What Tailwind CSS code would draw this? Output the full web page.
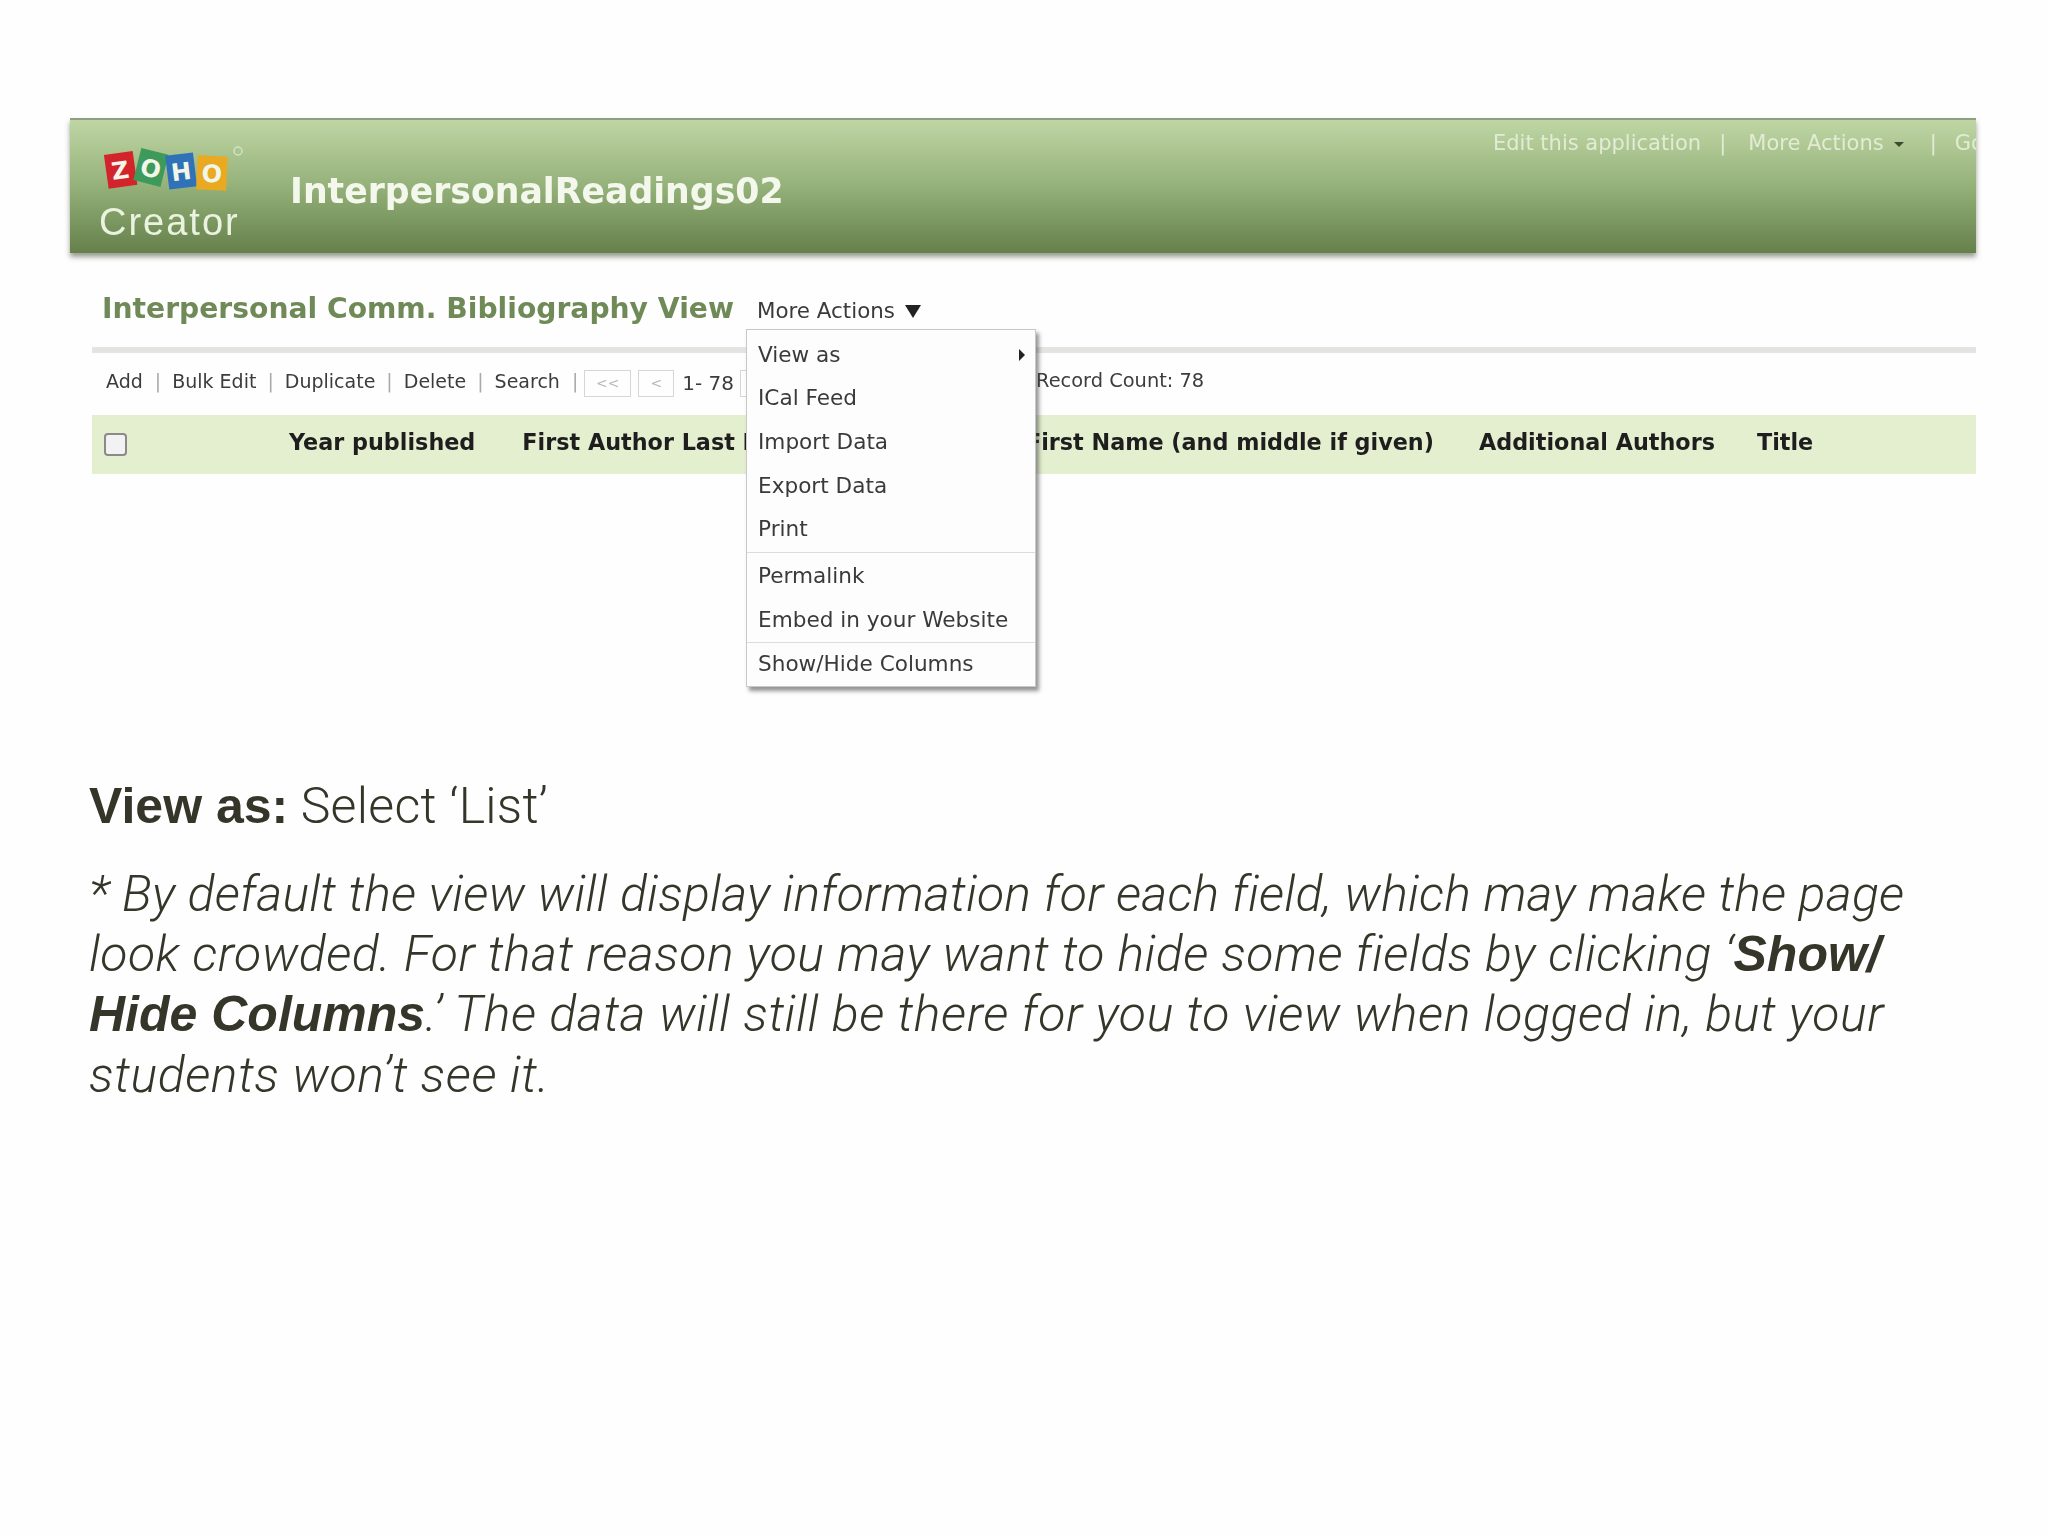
<!DOCTYPE html>
<html lang="en">
<head>
  <meta charset="UTF-8" />
  <title>View as: Select List</title>
  <script src="https://cdn.jsdelivr.net/npm/@tailwindcss/browser@4"></script>
</head>
<body class="w-[2048px] h-[1536px] overflow-hidden bg-[#fefefe] font-['Liberation_Sans',sans-serif]">

  <!-- Screenshot of the app -->
  <section class="relative ml-[70px] mt-[118px] w-[1906px] h-[602px] blur-[0.7px] font-['DejaVu_Sans',sans-serif]">

    <!-- Banner -->
    <header class="flex h-[135px] overflow-hidden border-t-2 border-[#8f9e86] bg-gradient-to-b from-[#bfd6a4] via-[#95b17a] to-[#65804a] shadow-[0_4px_5px_rgba(70,80,60,0.55)]">
      <div class="ml-[29px] w-[162px] shrink-0 pt-[23px]">
        <svg width="150" height="56" viewBox="0 0 150 56" class="block">
          <g font-family="DejaVu Sans" font-weight="700" font-size="24" text-anchor="middle" fill="#f2f6ea">
            <g transform="rotate(-8 21 26)"><rect x="7" y="10" width="29" height="34" fill="#d3242c" /><text x="21" y="36">Z</text></g>
            <g transform="rotate(14 52 24)"><rect x="38" y="8" width="28" height="33" fill="#3d9a5a" /><text x="52" y="34">O</text></g>
            <g transform="rotate(-7 82 27)"><rect x="68" y="11" width="28" height="34" fill="#2f72b8" /><text x="82" y="37">H</text></g>
            <g transform="rotate(3 113 29)"><rect x="98" y="13" width="30" height="34" fill="#e9a921" /><text x="113" y="39">O</text></g>
          </g>
          <circle cx="139" cy="8" r="4" fill="none" stroke="#d5e3c6" stroke-width="1.5" />
        </svg>
        <div class="mt-[3px] font-['Liberation_Sans',sans-serif] text-[38px] leading-[40px] tracking-[2px] text-[#eaf3df]">Creator</div>
      </div>
      <h1 class="ml-[29px] mt-[51px] w-[1203px] shrink-0 self-start text-[34.7px] leading-[40px] font-bold text-[#f4f8ec]">InterpersonalReadings02</h1>
      <nav class="mt-[9px] flex shrink-0 items-start whitespace-nowrap text-[21px] leading-[28px] text-[#e2ecd5]">
        <span>Edit this application</span>
        <span class="ml-[18px]">|</span>
        <span class="ml-[22px]">More Actions</span>
        <span class="ml-[10px] mt-[13px] h-0 w-0 border-x-[5px] border-t-[5px] border-x-transparent border-t-[#3c4a30]"></span>
        <span class="ml-[26px]">|</span>
        <span class="ml-[18px]">Go</span>
      </nav>
    </header>

    <!-- View title -->
    <div class="ml-[32px] mt-[38px] flex items-center">
      <h2 class="text-[28.2px] leading-[36px] font-bold text-[#6f8a57]">Interpersonal Comm. Bibliography View</h2>
      <span class="ml-[23px] mt-[4px] text-[21.4px] leading-[28px] text-[#3a3a3a]">More Actions</span>
      <span class="ml-[10px] mt-[4px] h-0 w-0 border-x-[8px] border-t-[13px] border-x-transparent border-t-[#222]"></span>
    </div>

    <div class="ml-[22px] mt-[20px] h-[6px] bg-[#e4e4e2]"></div>

    <!-- Toolbar -->
    <div class="ml-[36px] mt-[13px] flex h-[30px] items-center text-[19px] text-[#3c3c3c]">
      <span>Add</span><span class="ml-[12px] text-[#aaa]">|</span>
      <span class="ml-[11px]">Bulk Edit</span><span class="ml-[11px] text-[#aaa]">|</span>
      <span class="ml-[11px]">Duplicate</span><span class="ml-[11px] text-[#aaa]">|</span>
      <span class="ml-[11px]">Delete</span><span class="ml-[11px] text-[#aaa]">|</span>
      <span class="ml-[11px]">Search</span><span class="ml-[12px] text-[#aaa]">|</span>
      <span class="ml-[6px] mt-[4px] flex h-[27px] w-[47px] items-center justify-center border border-[#d6d6d6] text-[14px] text-[#b8b8b8]">&lt;&lt;</span>
      <span class="ml-[7px] mt-[4px] flex h-[27px] w-[36px] items-center justify-center border border-[#d6d6d6] text-[14px] text-[#b8b8b8]">&lt;</span>
      <span class="ml-[8px] mt-[4px] text-[20px]">1- 78</span>
      <span class="ml-[6px] mt-[4px] h-[27px] w-[36px] border border-[#d6d6d6]"></span>
      <span class="ml-[260px] text-[19.4px]">Record Count: 78</span>
    </div>

    <!-- Column headers -->
    <div class="ml-[22px] mt-[19px] flex h-[59px] items-center bg-[#e3efcf] pb-[3px] text-[22.3px] font-bold text-[#1e1e1e]">
      <span class="ml-[12px] mt-[3px] h-[23px] w-[23px] shrink-0 rounded-[4px] border-2 border-[#8a8a8a] bg-[#f2f2f2]"></span>
      <div class="ml-[162px] flex whitespace-nowrap">
        <span>Year published</span>
        <span class="ml-[47px]">First Author Last Name</span>
        <span class="ml-[52px]">First Author First Name (and middle if given)</span>
        <span class="ml-[45px]">Additional Authors</span>
        <span class="ml-[42px]">Title</span>
      </div>
    </div>

    <!-- More Actions menu -->
    <div class="absolute left-[676px] top-[211px] w-[290px] border border-[#c8c8c8] bg-[#fdfdfd] pt-[3px] text-[21.6px] text-[#3a3a3a] shadow-[3px_4px_4px_rgba(60,60,60,0.55)]">
      <div class="relative flex h-[43.7px] items-center pl-[11px]">View as
        <span class="absolute right-[10px] h-0 w-0 border-y-[6px] border-l-[6px] border-y-transparent border-l-[#222]"></span>
      </div>
      <div class="flex h-[43.7px] items-center pl-[11px]">ICal Feed</div>
      <div class="flex h-[43.7px] items-center pl-[11px]">Import Data</div>
      <div class="flex h-[43.7px] items-center pl-[11px]">Export Data</div>
      <div class="flex h-[43.7px] items-center pl-[11px]">Print</div>
      <div class="mt-[1px] border-t border-[#dcdcdc] pt-[1px]">
        <div class="flex h-[43.7px] items-center pl-[11px]">Permalink</div>
        <div class="flex h-[43.7px] items-center pl-[11px]">Embed in your Website</div>
      </div>
      <div class="border-t border-[#dcdcdc] pt-[1px]">
        <div class="flex h-[41.7px] items-center pl-[11px]">Show/Hide Columns</div>
      </div>
    </div>
  </section>

  <!-- Slide text -->
  <div class="ml-[89px] mt-[56px] font-['Roboto',sans-serif] font-light text-[#35352a] text-[50px] leading-[60px]">
    <p class="tracking-[0.3px]"><b class="font-['Liberation_Sans',sans-serif] font-bold tracking-normal">View as:</b> Select ‘List’</p>
    <p class="mt-[28px] italic">
      <span class="block tracking-[0.2px]">* By default the view will display information for each field, which may make the page</span>
      <span class="block tracking-[0.45px]">look crowded. For that reason you may want to hide some fields by clicking ‘<b class="font-['Liberation_Sans',sans-serif] font-bold tracking-normal">Show/</b></span>
      <span class="block tracking-[0.6px]"><b class="font-['Liberation_Sans',sans-serif] font-bold tracking-normal">Hide Columns</b>.’ The data will still be there for you to view when logged in, but your</span>
      <span class="mt-[1px] block tracking-[0.6px]">students won’t see it.</span>
    </p>
  </div>
</body>
</html>
